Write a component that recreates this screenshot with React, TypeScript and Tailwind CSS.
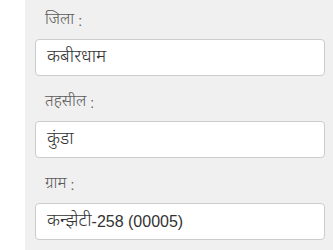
const fields = [
  { label: "जिला", value: ["कबीरधाम", ""] },
  { label: "तहसील", value: ["कुंडा", ""] },
  { label: "ग्राम", value: ["कन्झेटी", "-258 (00005)"] },
];

export default function App() {
  return (
    <div className="flex h-[250px] w-[333px] overflow-hidden bg-white font-['Liberation_Sans',Arial,sans-serif]">
      <div className="w-[25px] shrink-0" />
      <div className="flex flex-1 flex-col gap-[17px] bg-[#f0f0f0] pl-[10px] pr-[8px] pt-[11px]">
        {fields.map((f) => (
          <div key={f.label}>
            {/* label: Devanagari word + colon */}
            <div className="mb-2 flex h-5 items-center pl-[10px] text-[14px] text-[#5a5a5a]">
              <span className="font-['Noto_Sans_Devanagari'] text-[16px] font-light">{f.label}</span>
              <span className="ml-[4px]">:</span>
            </div>
            <div className="flex h-[37px] items-center rounded-[4px] border border-[#ccc] bg-white px-[11px] text-[16px] text-[#333]">
              <span className="font-['Noto_Sans_Devanagari'] text-[18px] font-light">{f.value[0]}</span>
              {f.value[1]}
            </div>
          </div>
        ))}
      </div>
    </div>
  );
}
